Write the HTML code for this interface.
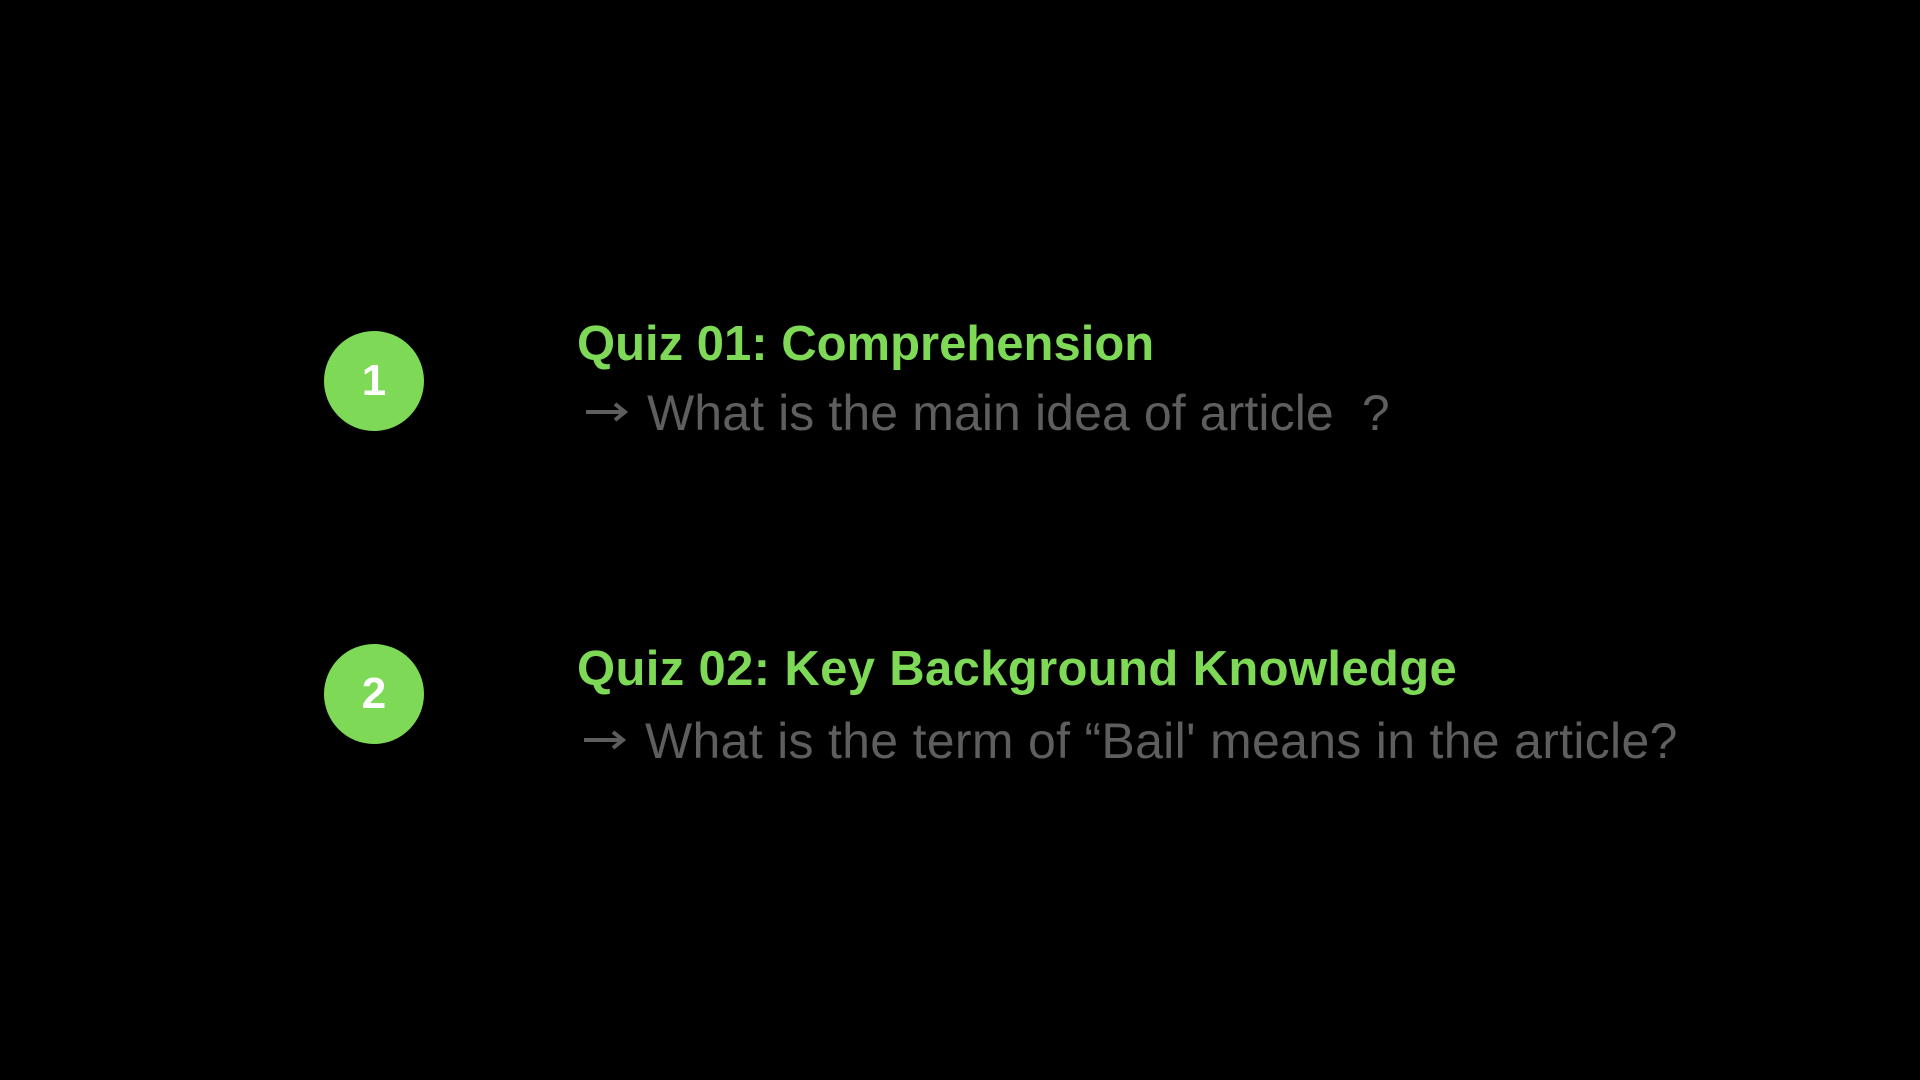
<!DOCTYPE html>
<html><head><style>
html,body{margin:0;padding:0;background:#000;width:1920px;height:1080px;overflow:hidden;font-family:"Liberation Sans",Arial,sans-serif}
.c{position:absolute;width:100px;height:100px;border-radius:50%;background:#7ed957;color:#fff;font-weight:bold;font-size:44px;text-align:center;line-height:100px}
.t{position:absolute;left:577px;color:#7ed957;font-weight:bold;font-size:49px;line-height:1;white-space:nowrap}
.s{position:absolute;color:#5e5e5e;font-size:50px;line-height:1;white-space:nowrap}
.a{position:absolute;width:42px;height:20px}
</style></head><body>
<div class="c" style="left:324px;top:331px">1</div>
<div class="c" style="left:324px;top:644px">2</div>
<div class="t" style="top:320px">Quiz 01: Comprehension</div>
<svg class="a" style="left:586px;top:402px" viewBox="0 0 42 20"><path d="M0 10H38M29 2L39 10L29 18" stroke="#5e5e5e" stroke-width="4" fill="none"/></svg>
<div class="s" style="left:647px;top:388px;letter-spacing:0.1px">What is the main idea of article&nbsp;&nbsp;?</div>
<div class="t" style="top:645px;letter-spacing:0.35px">Quiz 02: Key Background Knowledge</div>
<svg class="a" style="left:584px;top:730px" viewBox="0 0 42 20"><path d="M0 10H38M29 2L39 10L29 18" stroke="#5e5e5e" stroke-width="4" fill="none"/></svg>
<div class="s" style="left:645px;top:716px;letter-spacing:0.3px">What is the term of “Bail' means in the article?</div>
</body></html>
